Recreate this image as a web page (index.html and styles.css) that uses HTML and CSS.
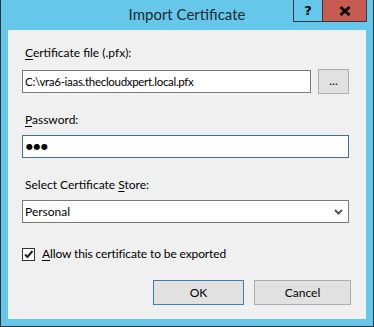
FILE: index.html
```html
<!DOCTYPE html>
<html>
<head>
<meta charset="utf-8">
<link rel="stylesheet" href="styles.css">
</head>
<body>
<div class="window">
  <div class="titlebar">
    <div></div>
    <div class="title">Import Certificate</div>
    <div class="caption">
      <div class="cap-btn help">?</div>
      <div class="cap-btn close">
        <svg width="12" height="10" viewBox="0 0 12 10"><path d="M1.5 1 L10.5 9 M10.5 1 L1.5 9" stroke="#000" stroke-width="2.8" fill="none"/></svg>
      </div>
    </div>
  </div>
  <div class="client">
    <div class="label l1"><u>C</u>ertificate file (.pfx):</div>
    <div class="file-row">
      <div class="textbox file">C:\vra6-iaas.thecloudxpert.local.pfx</div>
      <div class="btn browse">...</div>
    </div>
    <div class="label l2"><u>P</u>assword:</div>
    <div class="textbox pw"><span class="dots">●●●</span></div>
    <div class="label l3">Select Certificate <u>S</u>tore:</div>
    <div class="textbox select">
      <span>Personal</span>
      <svg class="chev" width="9" height="6" viewBox="0 0 9 6"><path d="M1 1 L4.5 4.5 L8 1" stroke="#555" stroke-width="2" fill="none"/></svg>
    </div>
    <div class="check-row">
      <div class="checkbox">
        <svg width="11" height="11" viewBox="0 0 11 11"><path d="M2 5.5 L4.5 8 L9.5 2" stroke="#222" stroke-width="2" fill="none"/></svg>
      </div>
      <div class="label allow"><u>A</u>llow this certificate to be exported</div>
    </div>
    <div class="btn-row">
      <div class="btn ok">OK</div>
      <div class="btn cancel">Cancel</div>
    </div>
  </div>
</div>
</body>
</html>
```
FILE: styles.css
```css
html, body {
  margin: 0;
  padding: 0;
}
body {
  width: 374px;
  height: 327px;
  overflow: hidden;
  font-family: Lato, "Noto Sans", sans-serif;
  font-size: 12px;
  color: #000;
}
.window {
  width: 372px;
  height: 326px;
  background: #65c7ea;
  border-left: 1px solid #2f3436;
  border-right: 1px solid #2f3436;
  border-bottom: 1px solid #2f3436;
  display: flex;
  flex-direction: column;
}
.titlebar {
  height: 30px;
  display: grid;
  grid-template-columns: 1fr auto 1fr;
  align-items: start;
}
.title {
  font-size: 15px;
  line-height: 30px;
  color: #1d2a33;
  margin-top: -1px;
}
.caption {
  justify-self: end;
  margin-right: 6px;
  display: flex;
  border: 1px solid #34393b;
  border-top: none;
  height: 21px;
}
.cap-btn {
  height: 21px;
  display: flex;
  align-items: center;
  justify-content: center;
}
.help {
  width: 28px;
  background: #65c7ea;
  border-right: 1px solid #34393b;
  font-family: "DejaVu Sans", sans-serif;
  font-weight: bold;
  font-size: 13px;
}
.close {
  width: 43px;
  background: #c75b50;
}
.client {
  margin: 0 7px 7px 7px;
  height: 289px;
  background: #f0f0f0;
  display: flex;
  flex-direction: column;
  align-items: flex-start;
  padding-left: 14px;
  box-sizing: border-box;
}
.label {
  line-height: 16px;
  padding-left: 3px;
  white-space: nowrap;
}
.allow { letter-spacing: -0.12px; }
u {
  text-decoration-thickness: 1px;
  text-underline-offset: 2px;
}
.l1 { margin-top: 15px; }
.file-row {
  margin-top: 8px;
  display: flex;
  align-items: center;
}
.textbox {
  box-sizing: border-box;
  height: 23px;
  border: 1px solid #7a7a7a;
  background: #fff;
  padding-left: 2px;
  display: flex;
  align-items: center;
  white-space: nowrap;
  overflow: hidden;
}
.file {
  width: 289px;
  font-size: 11.5px;
  letter-spacing: -0.3px;
}
.btn {
  box-sizing: border-box;
  height: 25px;
  background: #e1e1e1;
  border: 1px solid #adadad;
  display: flex;
  align-items: center;
  justify-content: center;
}
.browse {
  width: 31px;
  margin-left: 7px;
  padding-bottom: 3px;
}
.l2 { margin-top: 18px; }
.pw {
  margin-top: 7px;
  width: 327px;
  border-color: #3e6f9e;
}
.dots {
  font-family: "DejaVu Sans", sans-serif;
  font-size: 8px;
  letter-spacing: 0.5px;
  padding-left: 1px;
}
.l3 { margin-top: 19px; }
.select {
  margin-top: 7px;
  width: 327px;
  justify-content: space-between;
  padding-right: 5px;
}
.chev { margin-top: 1px; }
.check-row {
  margin-top: 23px;
  display: flex;
  align-items: center;
}
.checkbox {
  box-sizing: border-box;
  width: 13px;
  height: 13px;
  border: 1px solid #333;
  background: #fff;
  margin-right: 4px;
}
.checkbox svg { display: block; }
.btn-row {
  margin-top: 18px;
  margin-left: 131px;
  display: flex;
  gap: 10px;
}
.ok {
  width: 91px;
  border-color: #3c7fb1;
}
.cancel {
  width: 97px;
}
```
